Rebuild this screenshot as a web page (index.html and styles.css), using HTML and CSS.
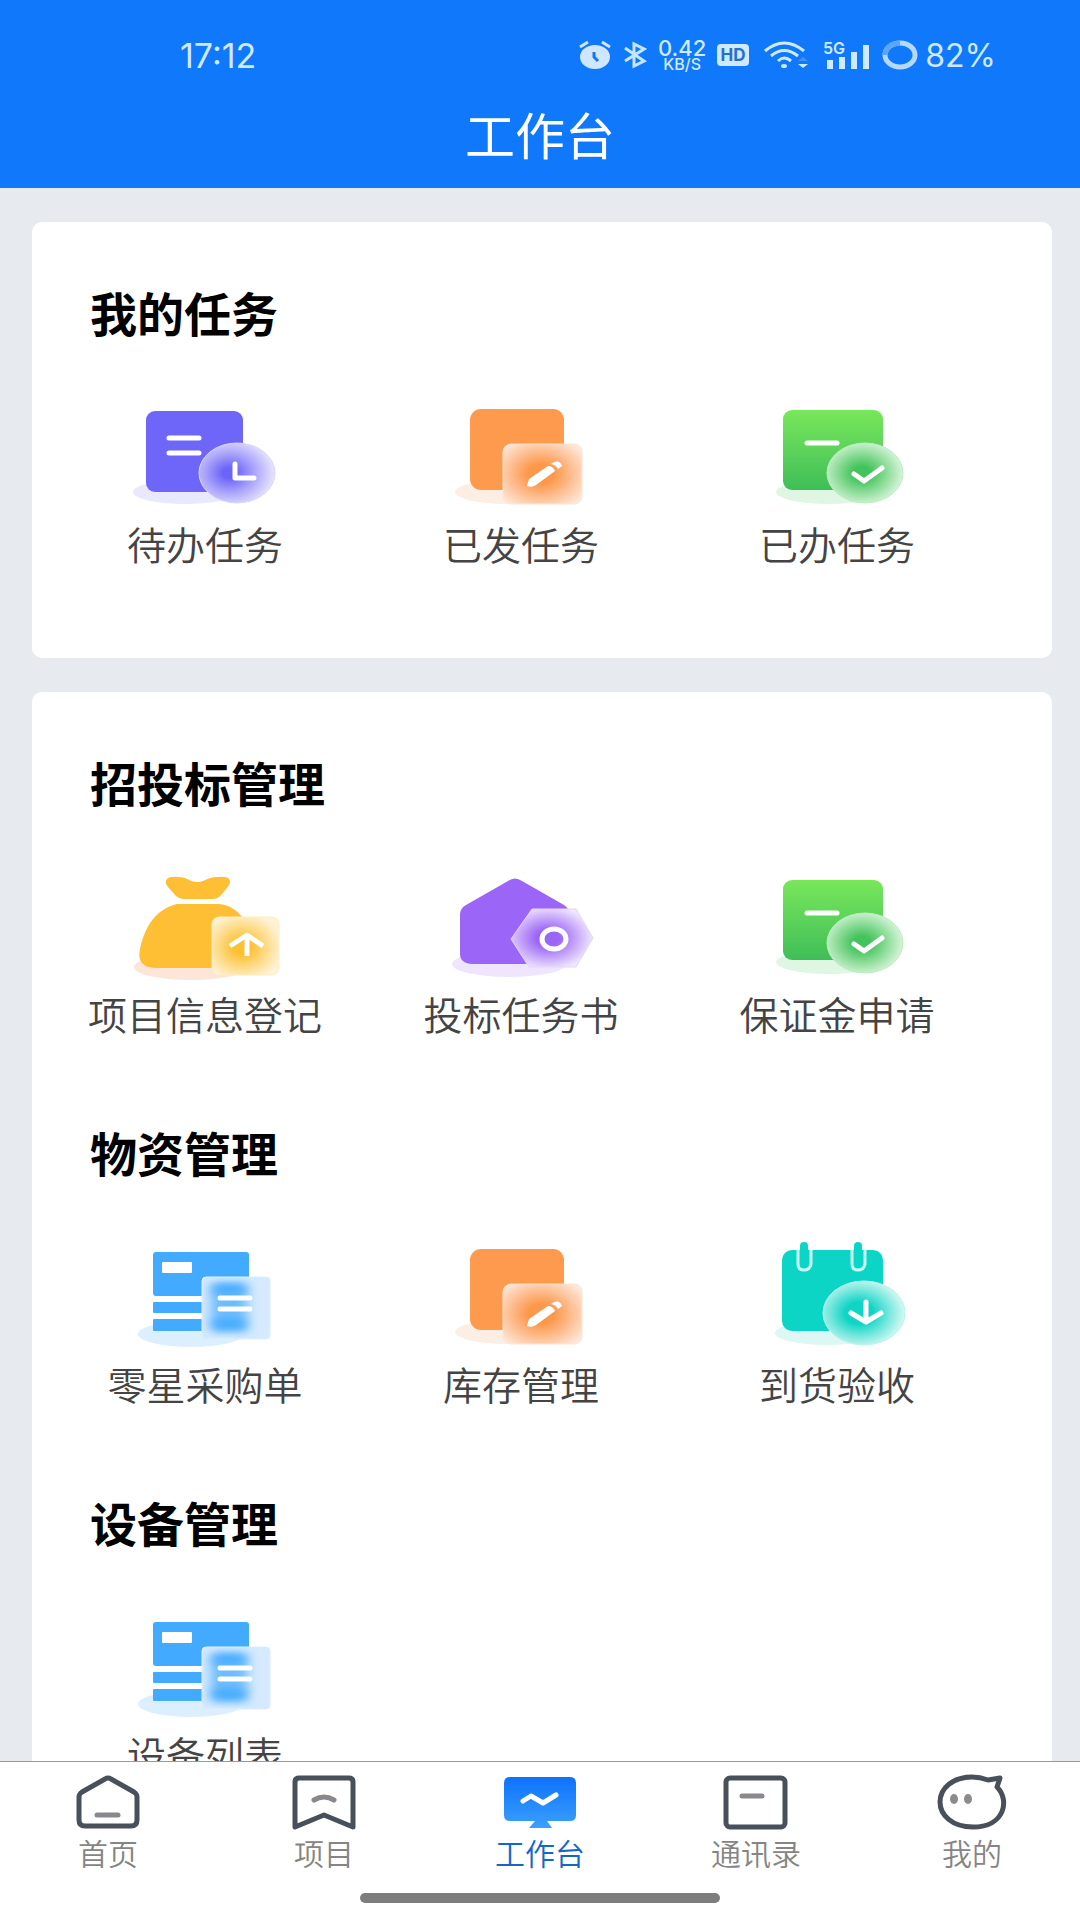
FILE: index.html
```html
<!DOCTYPE html>
<html lang="zh-CN">
<head>
<meta charset="UTF-8" />
<meta name="viewport" content="width=device-width, initial-scale=1" />
<title>工作台</title>
<link rel="stylesheet" href="styles.css">
</head>
<body>
  <!-- shared icons -->
  <svg class="sprite" width="0" height="0" aria-hidden="true">
    <defs>
      <radialGradient id="g-indigo" cx="0.4" cy="0.5" r="0.58">
        <stop offset="0.15" stop-color="#6c64f8" /><stop offset="0.55" stop-color="#a8a2fb" /><stop offset="1" stop-color="#e3e0fe" />
      </radialGradient>
      <radialGradient id="g-orange" cx="0.48" cy="0.5" r="0.65">
        <stop offset="0.25" stop-color="#fc984b" /><stop offset="0.65" stop-color="#fdc399" /><stop offset="1" stop-color="#fee9db" />
      </radialGradient>
      <radialGradient id="g-green" cx="0.46" cy="0.5" r="0.56">
        <stop offset="0.2" stop-color="#43c35b" /><stop offset="0.6" stop-color="#90dd9b" /><stop offset="1" stop-color="#dcf6df" />
      </radialGradient>
      <radialGradient id="g-yellow" cx="0.45" cy="0.52" r="0.6">
        <stop offset="0.2" stop-color="#fcc032" /><stop offset="0.6" stop-color="#fddb88" /><stop offset="1" stop-color="#fff2d5" />
      </radialGradient>
      <radialGradient id="g-purple" cx="0.45" cy="0.5" r="0.55">
        <stop offset="0.25" stop-color="#9b65f6" /><stop offset="0.65" stop-color="#c8a9fa" /><stop offset="1" stop-color="#efe6fe" />
      </radialGradient>
      <radialGradient id="g-teal" cx="0.44" cy="0.5" r="0.56">
        <stop offset="0.3" stop-color="#10d4c5" /><stop offset="0.68" stop-color="#7ee9df" /><stop offset="1" stop-color="#d6f8f4" />
      </radialGradient>
      <linearGradient id="g-sheet" x1="0" y1="0" x2="0" y2="1">
        <stop offset="0" stop-color="#79e75b" /><stop offset="1" stop-color="#3fbe58" />
      </linearGradient>
      <linearGradient id="g-screen" x1="0" y1="0" x2="0" y2="1">
        <stop offset="0" stop-color="#0d72fb" /><stop offset="1" stop-color="#3ba0fe" />
      </linearGradient>
      <filter id="soft" x="-40%" y="-80%" width="180%" height="260%"><feGaussianBlur stdDeviation="6 4" /></filter>
      <clipPath id="clip-doc"><rect x="77" y="42" width="68" height="62" rx="4" /></clipPath>
    </defs>

    <symbol id="icon-todo" viewBox="0 0 160 120">
      <ellipse cx="60" cy="97" rx="52" ry="12" fill="#e9e8fd" />
      <rect x="21" y="16" width="97" height="81" rx="9" fill="#6e66f8" />
      <path d="M44 43H74M44 58H74" class="mark" />
      <ellipse cx="112" cy="78" rx="38" ry="30" fill="url(#g-indigo)" stroke="#dad7fe" />
      <path d="M110 69V83H129" class="mark" />
    </symbol>

    <symbol id="icon-edit" viewBox="0 0 160 120">
      <ellipse cx="66" cy="97" rx="52" ry="12" fill="#fdeee4" />
      <rect x="29" y="14" width="94" height="81" rx="11" fill="#fd9a4d" />
      <rect x="62" y="49" width="79" height="60" rx="8" fill="url(#g-orange)" stroke="#fee4d1" />
      <path d="M86 91L88 84L107 71Q112 71 114 76L95 90Q91 93 86 91Z" fill="#fff" />
      <path d="M110 69L113 67Q119 65 121 71L117 74Q115 70 110 69Z" fill="#fff" />
    </symbol>

    <symbol id="icon-done" viewBox="0 0 160 120">
      <ellipse cx="72" cy="97" rx="53" ry="12" fill="#dff6e3" />
      <rect x="26" y="15" width="100" height="80" rx="9" fill="url(#g-sheet)" />
      <path d="M50 48H80" class="mark" />
      <ellipse cx="108" cy="78" rx="38" ry="30" fill="url(#g-green)" stroke="#bdecc0" />
      <path d="M97 79L107 86L125 73" class="mark" />
    </symbol>

    <symbol id="icon-bag" viewBox="0 0 160 120">
      <ellipse cx="66" cy="102" rx="57" ry="13" fill="#fde5da" />
      <path d="M43 22C37 14 44 11 53 12C62 12 65 17 72 17C80 17 84 11 94 12C105 11 108 16 102 23L96 30Q93 34 87 34H59Q54 34 50 30Z" fill="#febf35" />
      <path d="M52 39H94C115 40 130 65 130 90Q130 103 118 103H30Q11 102 15 84C20 61 31 44 52 39Z" fill="#febf35" />
      <rect x="87" y="52" width="67" height="58" rx="7" fill="url(#g-yellow)" stroke="#ffedc3" />
      <path d="M122 91V71M105 81L122 70L138 81" class="mark square" />
    </symbol>

    <symbol id="icon-house" viewBox="0 0 160 120">
      <ellipse cx="68" cy="99" rx="57" ry="13" fill="#efe5fe" />
      <path d="M67 16Q74 11 81 16L123 40Q128 43 128 49V90Q128 99 118 99H31Q19 98 19 89V50Q19 43 25 40Z" fill="#9b66f7" />
      <path d="M91 44H135L152 73L135 102H88L70 74Z" fill="url(#g-purple)" stroke="#e4d5fd" stroke-linejoin="round" />
      <ellipse cx="113" cy="74" rx="12" ry="10" class="mark" />
    </symbol>

    <symbol id="icon-list" viewBox="0 0 160 120">
      <ellipse cx="66" cy="99" rx="53" ry="13" fill="#dceffe" />
      <rect x="28" y="17" width="96" height="44" rx="3" fill="#43abff" />
      <rect x="37" y="27" width="30" height="11" rx="1" fill="#fff" />
      <rect x="28" y="67" width="52" height="11" rx="1" fill="#43abff" />
      <rect x="28" y="84" width="52" height="12" rx="1" fill="#43abff" />
      <rect x="77" y="42" width="68" height="62" rx="4" fill="#d5eafe" />
      <g clip-path="url(#clip-doc)">
        <rect x="86" y="50" width="36" height="46" fill="#6dbcff" filter="url(#soft)" />
        <rect x="88" y="49" width="32" height="9" fill="#3ea8ff" filter="url(#soft)" />
        <rect x="88" y="85" width="32" height="9" fill="#3ea8ff" filter="url(#soft)" />
      </g>
      <rect x="77" y="42" width="68" height="62" rx="4" fill="none" stroke="#dceeff" />
      <path d="M95 63H125M95 74H125" class="mark" />
    </symbol>

    <symbol id="icon-calendar" viewBox="0 0 160 120">
      <ellipse cx="70" cy="98" rx="52" ry="12" fill="#dcf7f4" />
      <rect x="25" y="15" width="101" height="81" rx="10" fill="#0cd5c6" />
      <g fill="#0cd5c6" stroke="#c9fbf5" stroke-width="3">
        <path d="M41 15V29Q41 35 47 35T54 29V15" />
        <path d="M95 15V29Q95 35 101 35T108 29V15" />
      </g>
      <path d="M47 11V29M101 11V29" stroke="#0cd5c6" stroke-width="8" stroke-linecap="round" />
      <ellipse cx="107" cy="78" rx="41" ry="32" fill="url(#g-teal)" stroke="#b8f4ee" />
      <path d="M109 67V87M94 78L109 87L124 78" class="mark" />
    </symbol>
  </svg>

  <div class="app">
    <header class="header">
      <div class="status-bar">
        <time class="clock">17:12</time>
        <div class="status-icons">
          <svg width="34" height="30" viewBox="0 0 34 30" aria-hidden="true">
            <ellipse cx="17" cy="17" rx="15" ry="12" fill="#cfe6ff" />
            <path d="M2 7L10 2M32 7L24 2" stroke="#cfe6ff" stroke-width="3" />
            <path d="M16 12V17L20 21" fill="none" stroke="#1677f5" stroke-width="3" />
          </svg>
          <svg width="24" height="30" viewBox="0 0 24 30" fill="none" stroke="#c5e6ff" stroke-width="3" aria-hidden="true">
            <path d="M2 8L21 21L11 26V4L21 9L2 21" />
          </svg>
          <span class="speed"><b>0.42</b><small>KB/S</small></span>
          <svg width="32" height="24" viewBox="0 0 32 24" aria-hidden="true">
            <rect y="1" width="32" height="22" rx="4" fill="#cfe9ff" />
            <text x="16" y="18" class="hd">HD</text>
          </svg>
          <svg class="wifi" width="44" height="30" viewBox="0 0 44 30" fill="none" stroke="#cdeaff" stroke-width="3" aria-hidden="true">
            <path d="M1 11Q20 -5 40 11M7 16Q20 5 34 16M14 21Q20 15 27 21" />
            <ellipse cx="20" cy="26" rx="3" ry="2" fill="#cdeaff" stroke="none" />
            <path d="M34 24H44L39 28Z" fill="#cdeaff" stroke="none" />
            <path d="M34 21H44L39 17Z" fill="#3f93fa" stroke="none" />
          </svg>
          <svg width="48" height="32" viewBox="0 0 48 32" fill="#cdeaff" aria-hidden="true">
            <text x="0" y="15" class="net">5G</text>
            <path d="M4 21h6v9H4zM16 18h6v12h-6zM28 13h6v17h-6zM40 6h6v24h-6z" />
          </svg>
          <svg width="36" height="30" viewBox="0 0 36 30" fill="none" stroke-width="5" aria-hidden="true">
            <ellipse cx="18" cy="15" rx="15" ry="12" stroke="#b4d9ff" />
            <path d="M3 15Q4 4 18 3" stroke="#5ba5fb" />
          </svg>
          <span class="battery">82%</span>
        </div>
      </div>
      <h1>工作台</h1>
    </header>

    <main>
      <div class="card">
        <section>
          <h2>我的任务</h2>
          <div class="grid">
            <a href="#todo"><svg class="icon" aria-hidden="true"><use href="#icon-todo" /></svg>待办任务</a>
            <a href="#sent"><svg class="icon" aria-hidden="true"><use href="#icon-edit" /></svg>已发任务</a>
            <a href="#done"><svg class="icon" aria-hidden="true"><use href="#icon-done" /></svg>已办任务</a>
          </div>
        </section>
      </div>

      <div class="card">
        <section>
          <h2>招投标管理</h2>
          <div class="grid">
            <a href="#register"><svg class="icon" aria-hidden="true"><use href="#icon-bag" /></svg>项目信息登记</a>
            <a href="#tender"><svg class="icon" aria-hidden="true"><use href="#icon-house" /></svg>投标任务书</a>
            <a href="#deposit"><svg class="icon" aria-hidden="true"><use href="#icon-done" /></svg>保证金申请</a>
          </div>
        </section>
        <section>
          <h2>物资管理</h2>
          <div class="grid">
            <a href="#purchase"><svg class="icon" aria-hidden="true"><use href="#icon-list" /></svg>零星采购单</a>
            <a href="#stock"><svg class="icon" aria-hidden="true"><use href="#icon-edit" /></svg>库存管理</a>
            <a href="#arrival"><svg class="icon" aria-hidden="true"><use href="#icon-calendar" /></svg>到货验收</a>
          </div>
        </section>
        <section>
          <h2>设备管理</h2>
          <div class="grid">
            <a href="#devices"><svg class="icon" aria-hidden="true"><use href="#icon-list" /></svg>设备列表</a>
          </div>
        </section>
      </div>
    </main>

    <footer>
      <nav class="tabbar">
        <a href="#home">
          <svg class="tab-icon" viewBox="0 0 72 58" aria-hidden="true">
            <path d="M33 6Q36 4 39 6L62 19Q65 21 65 24V47Q65 53 59 53H13Q7 53 7 47V24Q7 21 10 19Z" />
            <path class="detail" d="M25 42H46" />
          </svg>
          首页
        </a>
        <a href="#projects">
          <svg class="tab-icon" viewBox="0 0 72 58" aria-hidden="true">
            <path d="M7 54V9Q7 5 11 5H61Q65 5 65 9V54L36 42Z" />
            <path class="detail" d="M26 27Q36 21 46 27" />
          </svg>
          项目
        </a>
        <a href="#workbench" class="active" aria-current="page">
          <svg class="tab-icon" viewBox="0 0 72 58" aria-hidden="true">
            <path class="screen" d="M6 4H66Q72 4 72 10V42Q72 48 66 48H43L48 55H25L31 48H6Q0 48 0 42V10Q0 4 6 4Z" />
            <path class="wave" d="M19 28L27 23L39 30L52 22" />
          </svg>
          工作台
        </a>
        <a href="#contacts">
          <svg class="tab-icon" viewBox="0 0 72 58" aria-hidden="true">
            <rect x="6" y="5" width="59" height="49" rx="4" />
            <path class="detail" d="M22 23H42" />
          </svg>
          通讯录
        </a>
        <a href="#me">
          <svg class="tab-icon" viewBox="0 0 72 58" aria-hidden="true">
            <path d="M52 7L64 5L61 14C74 27 69 54 37 54C16 54 4 42 4 29C4 15 17 4 36 4Q44 4 52 7Z" />
            <ellipse class="eye" cx="18" cy="26" rx="4" ry="5" />
            <ellipse class="eye" cx="32" cy="26" rx="4" ry="5" />
          </svg>
          我的
        </a>
      </nav>
      <div class="home-indicator"></div>
    </footer>
  </div>
</body>
</html>
```
FILE: styles.css
```css
*, *::before, *::after {
  box-sizing: border-box;
}
html, body {
  margin: 0;
  height: 100%;
  font-family: 'Noto Sans CJK SC', sans-serif;
  background: #e7eaef;
}
a {
  color: inherit;
  text-decoration: none;
}
.sprite {
  position: absolute;
}
.app {
  height: 100vh;
  display: flex;
  flex-direction: column;
}

/* Header */
.header {
  flex: none;
  padding: 37px 0 25px;
  background: #1078fb;
  color: #fff;
}
.status-bar {
  display: flex;
  align-items: center;
  justify-content: space-between;
  height: 36px;
  padding: 0 84px 0 180px;
  font-family: Inter, sans-serif;
  font-size: 32px;
  color: #cfeaff;
}
.clock {
  font-size: 34px;
}
.status-icons {
  display: flex;
  align-items: center;
  gap: 11px;
}
.wifi {
  margin: 0 4px;
}
.speed {
  display: flex;
  flex-direction: column;
  align-items: center;
}
.speed b {
  font-size: 22px;
  font-weight: 500;
  line-height: 18px;
}
.speed small {
  font-size: 16px;
  font-weight: 500;
  line-height: 14px;
}
.battery {
  margin-left: -4px;
}
.hd {
  font-size: 17px;
  font-weight: 700;
  fill: #2470cf;
  text-anchor: middle;
}
.net {
  font-size: 16px;
  font-weight: 600;
}
h1 {
  margin: 30px 0 0;
  font-size: 50px;
  font-weight: 400;
  line-height: 60px;
  text-align: center;
}

/* Content */
main {
  flex: 1;
  min-height: 0;
  overflow-y: auto;
  scrollbar-width: none;
  padding: 34px 28px 0 32px;
}
.card {
  margin-bottom: 34px;
  padding: 0 57px 66px 15px;
  background: #fff;
  border-radius: 10px;
}
section {
  padding: 60px 0 27px;
}
h2 {
  margin: 0 0 53px 43px;
  font-size: 47px;
  font-weight: 700;
  line-height: 60px;
  color: #000;
}
.grid {
  display: grid;
  grid-template-columns: repeat(3, 1fr);
}
.grid a {
  display: flex;
  flex-direction: column;
  align-items: center;
  gap: 6px;
  font-size: 39px;
  font-weight: 350;
  line-height: 44px;
  white-space: nowrap;
  color: #444;
}
.icon {
  width: 160px;
  height: 120px;
}
.mark {
  fill: none;
  stroke: #fff;
  stroke-width: 5;
  stroke-linecap: round;
  stroke-linejoin: round;
}
.square {
  stroke-linecap: butt;
}

/* Bottom tabs */
footer {
  flex: none;
  padding: 11px 0 17px;
  background: #fff;
  border-top: 1px solid #999;
}
.tabbar {
  display: flex;
}
.tabbar a {
  flex: 1;
  display: flex;
  flex-direction: column;
  align-items: center;
  gap: 5px;
  font-size: 30px;
  font-weight: 350;
  line-height: 32px;
  color: #858585;
}
.tabbar .active {
  color: #1467c8;
}
.tab-icon {
  width: 72px;
  height: 58px;
  fill: none;
  stroke: #48515b;
  stroke-width: 5;
  stroke-linejoin: round;
  stroke-linecap: round;
}
.tab-icon .detail {
  stroke: #88888d;
}
.tab-icon .eye {
  fill: #8b8b8d;
  stroke: none;
}
.tab-icon .screen {
  fill: url(#g-screen);
  stroke: none;
}
.tab-icon .wave {
  stroke: #fff;
}
.home-indicator {
  width: 33.33%;
  height: 10px;
  margin: 25px auto 0;
  border-radius: 5px;
  background: #7d7d7d;
}
```
